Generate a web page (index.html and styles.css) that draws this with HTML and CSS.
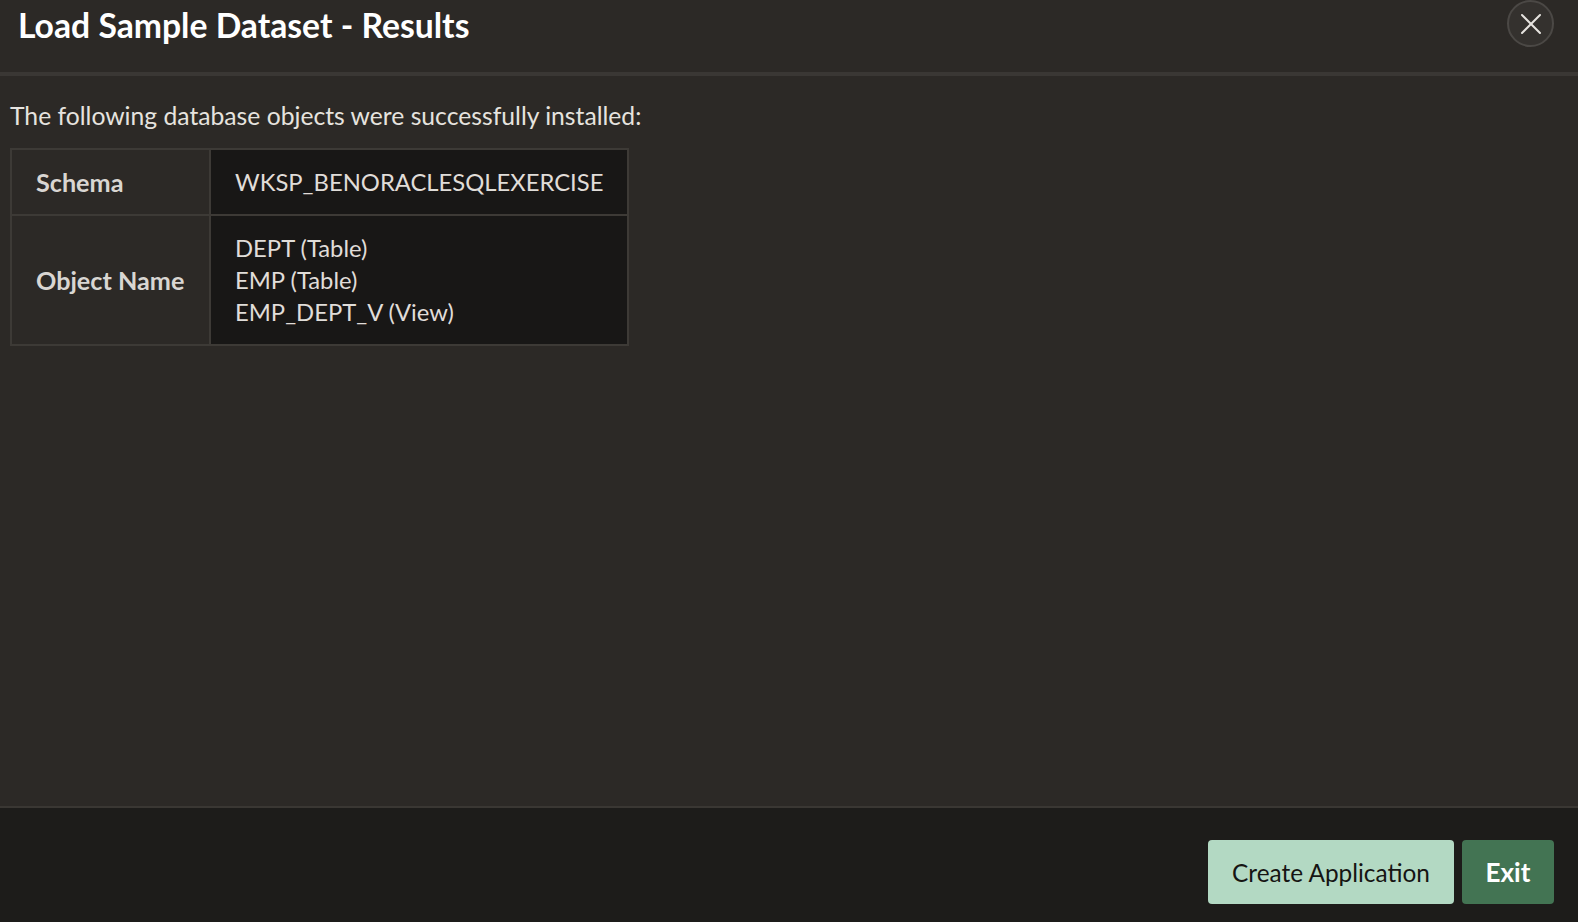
FILE: index.html
```html
<!DOCTYPE html>
<html lang="en">
<head>
<meta charset="utf-8">
<title>Load Sample Dataset - Results</title>
<link rel="stylesheet" href="styles.css">
</head>
<body>
<div class="dialog">
  <header class="dlg-header">
    <h1 class="dlg-title">Load Sample Dataset - Results</h1>
    <button class="close-btn" aria-label="Close">
      <svg width="22" height="22" viewBox="0 0 22 22"><path d="M2 2 L20 20 M20 2 L2 20" stroke="#e6e3df" stroke-width="2" fill="none" stroke-linecap="round"/></svg>
    </button>
  </header>
  <main class="dlg-body">
    <p class="intro">The following database objects were successfully installed:</p>
    <table class="results">
      <tr class="row-schema">
        <th>Schema</th>
        <td>WKSP_BENORACLESQLEXERCISE</td>
      </tr>
      <tr class="row-objects">
        <th>Object Name</th>
        <td>DEPT (Table)<br>EMP (Table)<br>EMP_DEPT_V (View)</td>
      </tr>
    </table>
  </main>
  <footer class="dlg-footer">
    <button class="btn btn-secondary">Create Application</button>
    <button class="btn btn-primary">Exit</button>
  </footer>
</div>
</body>
</html>
```
FILE: styles.css
```css
* { box-sizing: border-box; }
html, body { margin: 0; padding: 0; }
body {
  background: #2c2926;
  color: #e8e6e3;
  font-family: Lato, "Open Sans", sans-serif;
  width: 1578px;
  height: 922px;
  overflow: hidden;
}
.dialog {
  display: flex;
  flex-direction: column;
  height: 922px;
}
.dlg-header {
  height: 76px;
  flex: none;
  display: flex;
  align-items: flex-start;
  justify-content: space-between;
  padding: 0 24px 0 18px;
  border-bottom: 4px solid #3a3734;
}
.dlg-title {
  margin: 0;
  font-size: 33.7px;
  font-weight: 700;
  color: #ffffff;
  line-height: 50px;
}
.close-btn {
  width: 47px;
  height: 47px;
  margin-top: 0;
  border-radius: 50%;
  border: 2px solid #4b4845;
  background: #34312e;
  display: flex;
  align-items: center;
  justify-content: center;
  padding: 0;
}
.dlg-body {
  flex: 1;
  padding: 20px 10px 0 10px;
}
.intro {
  margin: 0 0 12px 0;
  font-size: 24.7px;
  line-height: 40px;
  color: #e6e3df;
}
.results {
  border-collapse: collapse;
  border: 2px solid #3d3a36;
}
.results th, .results td {
  border: 2px solid #3d3a36;
  line-height: 32px;
  text-align: left;
  vertical-align: middle;
  padding: 16px 24px;
}
.results th {
  width: 199px;
  font-size: 25.2px;
  font-weight: 700;
  color: #d9d6d2;
  background: #2c2926;
}
.results td {
  width: 413px;
  font-size: 23.8px;
  background: #181716;
  color: #e0ddd9;
}
.row-objects th, .row-objects td {
  padding-top: 16px;
  padding-bottom: 16px;
}
.dlg-footer {
  height: 116px;
  flex: none;
  background: #1d1c1a;
  border-top: 2px solid #3a3733;
  display: flex;
  justify-content: flex-end;
  align-items: flex-start;
  gap: 8px;
  padding: 32px 24px 0 0;
}
.btn {
  height: 64px;
  border: none;
  border-radius: 4px;
  font-family: Lato, "Open Sans", sans-serif;
  font-size: 24.4px;
  padding: 0;
  white-space: nowrap;
}
.btn-secondary {
  width: 246px;
  background: #b3d9c3;
  color: #161513;
}
.btn-primary {
  width: 92px;
  background: #437453;
  color: #ffffff;
  font-weight: 700;
  font-size: 26px;
}
```
